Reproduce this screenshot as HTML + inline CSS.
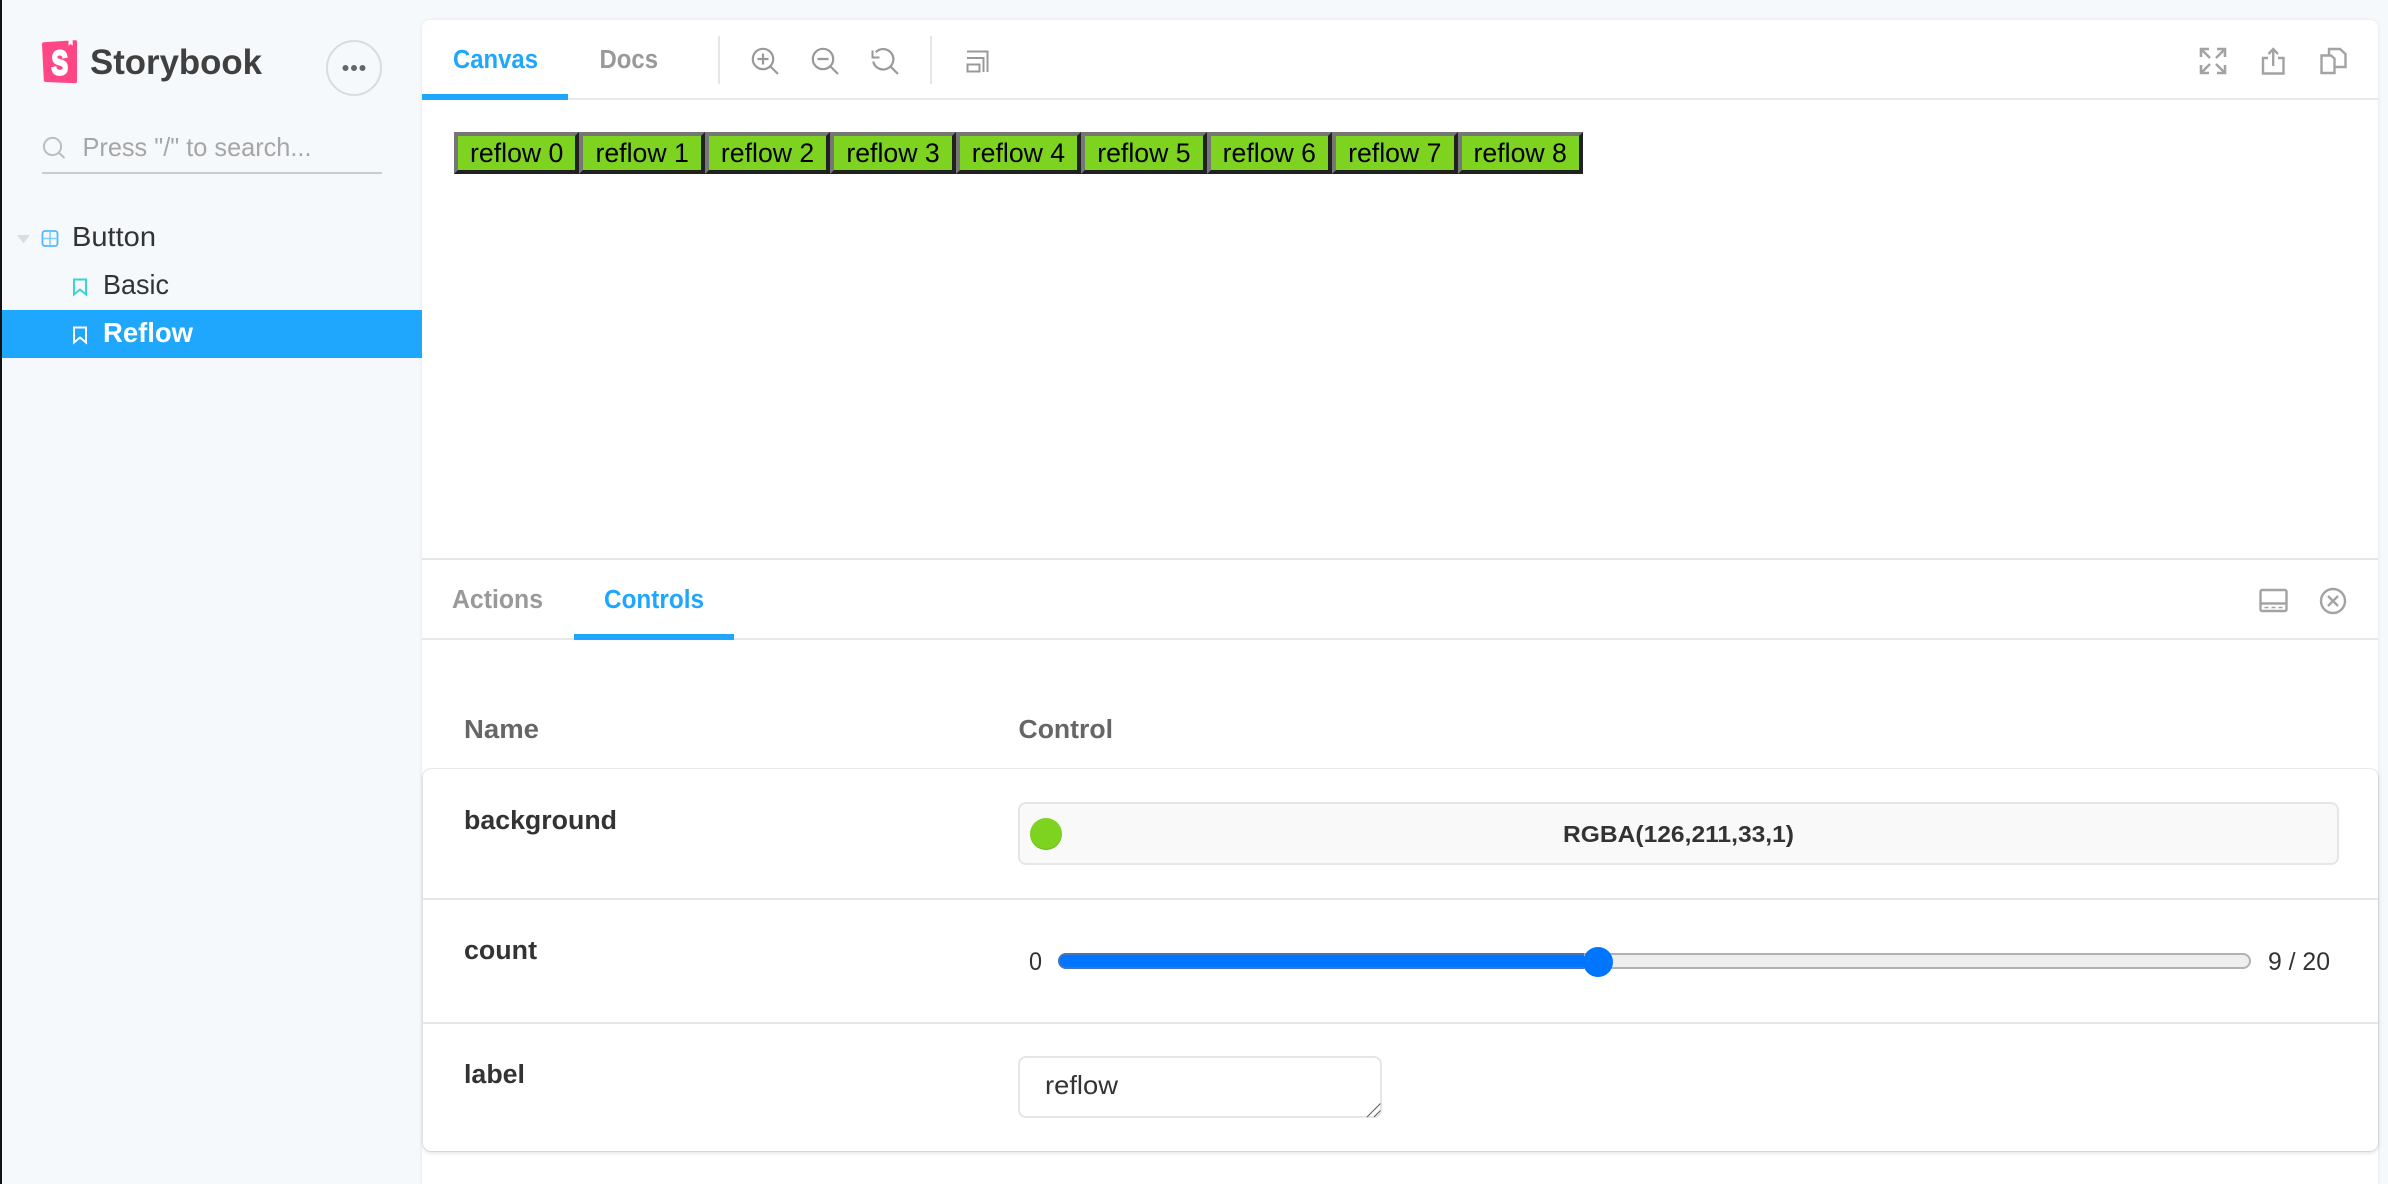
<!DOCTYPE html>
<html lang="en">
<head>
<meta charset="utf-8">
<title>Storybook</title>
<style>
html,body{margin:0;padding:0;width:2388px;height:1184px;overflow:hidden;background:#f6f9fc}
body{position:relative;font-family:"Liberation Sans",Arial,sans-serif}
.abs{position:absolute;box-sizing:border-box}
#strip{left:0;top:0;width:2px;height:1184px;background:#111}
#panel{left:422px;top:20px;width:1956px;height:1164px;background:#fff;border-radius:8px 8px 0 0;box-shadow:0 0 4px rgba(0,0,0,.08)}
#sel{left:2px;top:310px;width:420px;height:48px;background:#1ea7fd}
.hl{left:422px;width:1956px;height:2px;background:#e8e8e8}
.ul{background:#1ea7fd;height:6px}
#btns{left:454px;top:132px;display:flex;height:42px}
#btns button{box-sizing:border-box;height:42px;margin:0;padding:0 12px;width:125.44px;background:#7ed321;border-width:4px;border-style:solid;border-color:#767676 #212121 #212121 #767676;font:26.67px/30px "Liberation Sans",Arial,sans-serif;color:#000;white-space:nowrap}
#table{left:423px;top:769px;width:1955px;height:382px;border-radius:8px;background:#fff;box-shadow:0 0 0 1px rgba(0,0,0,.07),0 2px 5px rgba(0,0,0,.12)}
.row{left:423px;width:1955px;height:2px;background:#e6e6e6}
#cinput{left:1018px;top:802px;width:1321px;height:63px;background:#f9f9f9;border:2px solid #e6e6e6;border-radius:8px}
#swatch{left:1030px;top:818px;width:32px;height:32px;border-radius:50%;background:#7ed321;box-shadow:inset 0 -1px 1px rgba(0,0,0,.12)}
#track{left:1058px;top:953px;width:1193px;height:16px;background:#eee;border:2px solid #b2b2b2;border-radius:8px}
#fill{left:1058px;top:953px;width:526px;height:16px;background:#0075ff;border:2px solid #4673bd;border-right:0;border-radius:8px 0 0 8px}
#thumb{left:1583px;top:947px;width:30px;height:30px;border-radius:50%;background:#0075ff}
#ta{left:1018px;top:1056px;width:364px;height:62px;background:#fff;border:2px solid #e6e6e6;border-radius:8px}
svg{position:absolute;left:0;top:0}
text{font-family:"Liberation Sans",Arial,sans-serif}
</style>
</head>
<body>
<div class="abs" id="strip"></div>
<div class="abs" id="panel"></div>
<div class="abs" id="sel"></div>

<div class="abs hl" style="top:98px"></div>
<div class="abs ul" style="left:422px;top:94px;width:146px"></div>
<div class="abs" id="btns">
<button>reflow 0</button><button>reflow 1</button><button>reflow 2</button><button>reflow 3</button><button>reflow 4</button><button>reflow 5</button><button>reflow 6</button><button>reflow 7</button><button>reflow 8</button>
</div>

<div class="abs hl" style="top:558px;background:#e3e6e9"></div>
<div class="abs hl" style="top:638px"></div>
<div class="abs ul" style="left:574px;top:634px;width:160px"></div>

<div class="abs" id="table"></div>
<div class="abs row" style="top:898px"></div>
<div class="abs row" style="top:1022px"></div>
<div class="abs" id="cinput"></div>
<div class="abs" id="swatch"></div>
<div class="abs" id="track"></div>
<div class="abs" id="fill"></div>
<div class="abs" id="thumb"></div>
<div class="abs" id="ta"></div>

<svg width="2388" height="1184" viewBox="0 0 2388 1184" xmlns="http://www.w3.org/2000/svg">
<!-- logo -->
<path d="M43.5 42.3 75 40.2Q77 40 77 42V81Q77 83.4 75 83.2L46 82Q44 82 43.8 80L42 44.5Q42 42.4 43.5 42.3Z" fill="#ff4785"/>
<path d="M68.5 40.6V45.8L70.6 44 72.8 45.6 72.6 40.4Z" fill="#fff"/>
<text x="51.5" y="74.5" font-size="34" font-weight="700" fill="#fff" stroke="#fff" stroke-width="2.4" textLength="16.5" lengthAdjust="spacingAndGlyphs">S</text>
<text x="90" y="74" font-size="35" font-weight="700" fill="#404040" textLength="172" lengthAdjust="spacingAndGlyphs">Storybook</text>

<!-- menu button -->
<circle cx="354" cy="68" r="27" fill="none" stroke="#d9dbde" stroke-width="2"/>
<circle cx="345.5" cy="68" r="3" fill="#666"/><circle cx="354" cy="68" r="3" fill="#666"/><circle cx="362.5" cy="68" r="3" fill="#666"/>

<!-- search -->
<circle cx="52.5" cy="146.5" r="8.6" fill="none" stroke="#bdbdbd" stroke-width="2"/>
<path d="M58.8 152.8 64.5 158" stroke="#bdbdbd" stroke-width="2" fill="none"/>
<text x="82.5" y="156" font-size="26" fill="#a6a6a6" textLength="229" lengthAdjust="spacingAndGlyphs">Press "/" to search...</text>
<rect x="42" y="172" width="340" height="2" fill="#c9cbd0"/>

<!-- tree -->
<path d="M17 235H30L23.5 243.5Z" fill="#dcdcdc"/>
<rect x="42.5" y="231" width="15" height="15" rx="2.5" fill="none" stroke="#4db8fd" stroke-width="1.8"/>
<path d="M50 231V246M42.5 238.5H57.5" stroke="#7fcdfd" stroke-width="1.5"/>
<text x="72" y="246" font-size="27.5" fill="#333" textLength="84" lengthAdjust="spacingAndGlyphs">Button</text>
<path d="M74 279.5H86V294.5L80 289.5 74 294.5Z" fill="none" stroke="#37d5d3" stroke-width="2"/>
<text x="103" y="294" font-size="27.5" fill="#333" textLength="66" lengthAdjust="spacingAndGlyphs">Basic</text>
<path d="M74 327.5H86V342.5L80 337.5 74 342.5Z" fill="none" stroke="#fff" stroke-width="2"/>
<text x="103" y="342" font-size="27.5" font-weight="700" fill="#fff" textLength="90" lengthAdjust="spacingAndGlyphs">Reflow</text>

<!-- toolbar -->
<text x="453" y="68" font-size="25.5" font-weight="700" fill="#1ea7fd" textLength="85" lengthAdjust="spacingAndGlyphs">Canvas</text>
<text x="599.5" y="68" font-size="25.5" font-weight="700" fill="#999" textLength="58.5" lengthAdjust="spacingAndGlyphs">Docs</text>
<rect x="718" y="36" width="2" height="48" fill="#e6e6e6"/>
<rect x="930" y="36" width="2" height="48" fill="#e6e6e6"/>
<g fill="none" stroke="#999" stroke-width="2.2">
<circle cx="763" cy="59" r="10.2"/><path d="M770.5 66.5 778 74M757.5 59H768.5M763 53.5V64.5"/>
<circle cx="823" cy="59" r="10.2"/><path d="M830.5 66.5 838 74M817.5 59H828.5"/>
<path d="M875.8 52.2A10.2 10.2 0 1 1 873.2 61.5"/><path d="M890.5 66.5 898 74"/>
<path d="M872.5 50.5V57.5H879.5" stroke-width="2"/>
<path d="M967.5 64.5H979.5V71.5H967.5Z" stroke-width="2"/>
<path d="M967 58H983.5V72" stroke-width="2"/>
<path d="M967 51.5H987.5V72" stroke-width="2"/>
</g>

<!-- right icons -->
<g fill="none" stroke="#a3a3a3" stroke-width="2.4">
<path d="M2202 50 2210 58M2224 50 2216 58M2202 72 2210 64M2224 72 2216 64"/>
<path d="M2201 57V49H2209M2225 57V49H2217M2201 65V73H2209M2225 65V73H2217" stroke-width="2.6"/>
<path d="M2268 58H2263V73.5H2283.5V58H2278"/>
<path d="M2273.2 66V50M2268.5 54 2273.2 49 2278 54"/>
<path d="M2321.5 55.5H2331L2334.5 58.5V73H2321.5Z"/>
<path d="M2329 55V49H2340L2345.5 54V67H2335"/>
</g>

<!-- addon tabs -->
<text x="452" y="608" font-size="25.5" font-weight="700" fill="#999" textLength="91" lengthAdjust="spacingAndGlyphs">Actions</text>
<text x="604" y="608" font-size="25.5" font-weight="700" fill="#1ea7fd" textLength="100" lengthAdjust="spacingAndGlyphs">Controls</text>
<g fill="none" stroke="#a3a3a3" stroke-width="2.4">
<rect x="2260.5" y="590" width="26" height="21" rx="1.5"/>
<path d="M2260.5 603.5H2286.5"/>
<path d="M2264.5 607.5H2282.5" stroke-width="1.6" stroke-dasharray="4 3"/>
<circle cx="2333" cy="601" r="12"/>
<path d="M2328 596 2338 606M2338 596 2328 606"/>
</g>

<!-- table -->
<text x="464" y="738" font-size="25.5" font-weight="700" fill="#666" textLength="75" lengthAdjust="spacingAndGlyphs">Name</text>
<text x="1018.5" y="738" font-size="25.5" font-weight="700" fill="#666" textLength="94.5" lengthAdjust="spacingAndGlyphs">Control</text>
<text x="464" y="829" font-size="25.5" font-weight="700" fill="#333" textLength="153" lengthAdjust="spacingAndGlyphs">background</text>
<text x="1563" y="842" font-size="23" font-weight="700" fill="#333" textLength="231" lengthAdjust="spacingAndGlyphs">RGBA(126,211,33,1)</text>
<text x="464" y="959" font-size="25.5" font-weight="700" fill="#333" textLength="73" lengthAdjust="spacingAndGlyphs">count</text>
<text x="1029" y="970" font-size="25" fill="#333" textLength="13" lengthAdjust="spacingAndGlyphs">0</text>
<text x="2268" y="970" font-size="25" fill="#333" textLength="62" lengthAdjust="spacingAndGlyphs">9 / 20</text>
<text x="464" y="1083" font-size="25.5" font-weight="700" fill="#333" textLength="61" lengthAdjust="spacingAndGlyphs">label</text>
<text x="1045" y="1094" font-size="26" fill="#333" textLength="73" lengthAdjust="spacingAndGlyphs">reflow</text>
<path d="M1367 1117 1380.5 1103.5M1374 1117 1380.5 1110.5" stroke="#666" stroke-width="1.2" fill="none"/>
</svg>
</body>
</html>
